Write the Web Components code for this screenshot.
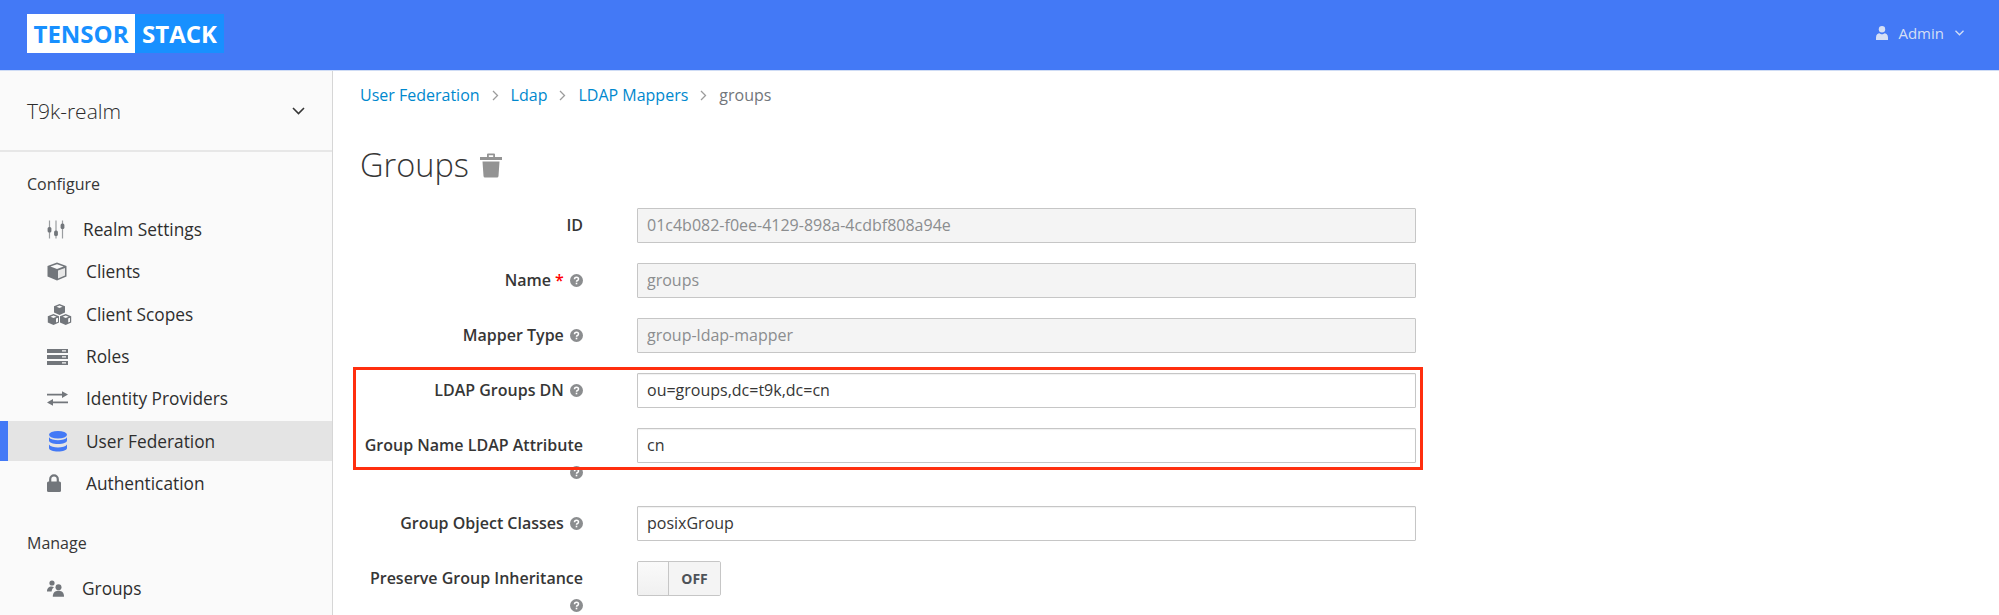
<!DOCTYPE html>
<html>
<head>
<meta charset="utf-8">
<title>Groups</title>
<style>
  html, body { margin: 0; height: 615px; overflow: hidden; background: #fff; }
  body { font-family: "Open Sans", sans-serif; font-size: 16px; color: #363636; }
</style>
</head>
<body>
<app-shell>
  <app-header slot="header"></app-header>
  <realm-sidebar slot="side" realm="T9k-realm">
    <nav-section title="Configure">
      <nav-item icon="sliders" gap="16">Realm Settings</nav-item>
      <nav-item icon="cube">Clients</nav-item>
      <nav-item icon="cubes">Client Scopes</nav-item>
      <nav-item icon="server">Roles</nav-item>
      <nav-item icon="exchange">Identity Providers</nav-item>
      <nav-item icon="database" active>User Federation</nav-item>
      <nav-item icon="lock">Authentication</nav-item>
    </nav-section>
    <nav-section title="Manage">
      <nav-item icon="users" gap="15">Groups</nav-item>
    </nav-section>
  </realm-sidebar>
  <mapper-page slot="main">
    <form-row label="ID"><text-field value="01c4b082-f0ee-4129-898a-4cdbf808a94e" disabled></text-field></form-row>
    <form-row label="Name" required help><text-field value="groups" disabled></text-field></form-row>
    <form-row label="Mapper Type" help><text-field value="group-ldap-mapper" disabled></text-field></form-row>
    <form-row label="LDAP Groups DN" help><text-field value="ou=groups,dc=t9k,dc=cn"></text-field></form-row>
    <form-row label="Group Name LDAP Attribute" help><text-field value="cn"></text-field></form-row>
    <form-row label="Group Object Classes" help><text-field value="posixGroup"></text-field></form-row>
    <form-row label="Preserve Group Inheritance" help><off-switch></off-switch></form-row>
  </mapper-page>
</app-shell>

<script>
'use strict';

(function () {

  const ICONS = {
    sliders: `<svg width="18" height="19" viewBox="0 0 18 19" fill="#72767b">
        <path d="M2.500 .5v18M9 .5v18M15.500 .5v18" stroke="#9a9da0" stroke-width="1.200"/>
        <rect x=".6" y="7" width="3.800" height="5.500" rx="1.500"/>
        <rect x="7.100" y="10.500" width="3.800" height="5.500" rx="1.500"/>
        <rect x="13.600" y="3.500" width="3.800" height="5.500" rx="1.500"/></svg>`,
    cube: `<svg width="20" height="19" viewBox="0 0 20 19" fill="currentColor">
        <path d="M10 0.500 19.500 4v10.500L10 18.500 0.500 14.500V4z"/>
        <path d="M10 2.200 16.600 4.600 10 7 3.400 4.600z" fill="#fafafa"/>
        <path d="M11 8.600 18 6v7.400l-7 3z" fill="#e8e8e8"/></svg>`,
    cubes: `<svg width="25" height="21" viewBox="0 0 25 21" fill="currentColor">
        <path d="M12.500 0 18 2.200v6.300l-5.500 2.400L7 8.500V2.200z"/>
        <path d="M6.500 10 12 12.200v6.300L6.500 21 .8 18.500v-6.300z"/>
        <path d="M18.700 10 24.200 12.200v6.300L18.700 21 13 18.500v-6.300z"/>
        <path d="M12.500 1.500 15.500 2.700 12.500 3.900 9.500 2.700zM6.500 11.500 9.500 12.700 6.500 13.900 3.500 12.700zM18.700 11.500 21.700 12.700 18.700 13.900 15.700 12.700z" fill="#fafafa"/>
        <path d="M9 14.500 11 13.700v4l-2 .9zM21.200 14.500 23 13.700v4l-1.800.9z" fill="#fafafa"/></svg>`,
    server: `<svg width="21" height="16" viewBox="0 0 21 16" fill="currentColor">
        <path d="M0 0h21v4H0zM0 6h21v4H0zM0 12h21v4H0z"/>
        <path d="M15 1.300h4v1.200h-4zM15 7.300h4v1.200h-4zM15 13.300h4v1.200h-4z" fill="#fafafa"/></svg>`,
    exchange: `<svg width="21" height="15" viewBox="0 0 21 15" fill="currentColor">
        <path d="M0 2.800h15V.3l6 3.300-6 3.300V4.500H0z"/><path d="M21 10.500H6V8L0 11.400l6 3.300v-2.500h15z"/></svg>`,
    database: `<svg width="18" height="21" viewBox="0 0 18 21" fill="currentColor">
        <ellipse cx="9" cy="3.800" rx="9" ry="3.800"/>
        <path d="M0 6.200C1.500 8.400 5 9.200 9 9.200s7.500-.8 9-3V9.500c0 2-4 3.500-9 3.500s-9-1.500-9-3.500z"/>
        <path d="M0 12c1.500 2.200 5 3 9 3s7.500-.8 9-3v3.500c0 2-4 3.500-9 3.500s-9-1.500-9-3.500z" transform="translate(0 1.500)"/></svg>`,
    lock: `<svg width="14" height="18" viewBox="0 0 14 18" fill="currentColor">
        <path d="M3.200 8V5.200a3.800 3.800 0 0 1 7.600 0V8" fill="none" stroke="currentColor" stroke-width="2.200"/>
        <rect y="7.500" width="14" height="10.500" rx="1.500"/></svg>`,
    users: `<svg width="17" height="17" viewBox="0 0 17 17" fill="currentColor">
        <circle cx="5" cy="3" r="2.600"/><path d="M0 11.500C0 8 2 6.500 4.500 6.500c1 0 1.800.3 2.500.8-1.500 1-2.200 2.500-2.400 4.200z"/>
        <circle cx="11.500" cy="7.300" r="3"/><path d="M5.800 16.800c0-4 2-6 5.700-6s5.500 2 5.500 6z"/></svg>`
  };

  class AppShell extends HTMLElement {
    constructor() {
      super();
      const shadow = this.attachShadow({ mode: 'open' });
      shadow.innerHTML = `
        <style>
          :host { display: flex; flex-direction: column; height: 615px; overflow: hidden; }
          .body { display: flex; flex: 1; min-height: 0; }
        </style>
        <slot name="header"></slot>
        <div class="body">
          <slot name="side"></slot>
          <slot name="main"></slot>
        </div>
      `;
    }
  }

  class AppHeader extends HTMLElement {
    constructor() {
      super();
      const shadow = this.attachShadow({ mode: 'open' });
      shadow.innerHTML = `
        <style>
          :host { display: flex; align-items: center; justify-content: space-between; box-sizing: border-box;
                  height: 71px; padding: 0 35px 8px 27px; background: #4379f6; border-bottom: 1px solid #cfdcf5; }
          .logo { display: flex; height: 39px; margin-top: 4px; font: 700 24px/39px "Open Sans", sans-serif; }
          .logo span { display: block; text-align: center; box-sizing: border-box; }
          .tensor { width: 108px; background: #fff; color: #1890ff; }
          .stack { width: 89px; background: #1890ff; color: #fff; }
          .user { display: flex; align-items: center; color: #d5dff5; font-size: 15px; margin: 4px 0 0; }
          .user svg { display: block; }
          .name { margin: 0 11px 0 10px; }
        </style>
        <div class="logo"><span class="tensor">TENSOR</span><span class="stack">STACK</span></div>
        <div class="user">
          <svg width="12" height="14" viewBox="0 0 12 14" fill="currentColor"><circle cx="6" cy="3.300" r="3.200"/><path d="M0 14v-2.500C0 8.500 2 7.200 3.500 7.200 4.500 8 5 8.200 6 8.200s1.500-.2 2.500-1C10 7.200 12 8.500 12 11.500V14z"/></svg>
          <span class="name">Admin</span>
          <svg width="9" height="6" viewBox="0 0 9 6" fill="none" stroke="currentColor" stroke-width="1.300"><path d="M.5 .8 4.500 4.800 8.500 .8"/></svg>
        </div>
      `;
    }
  }

  class RealmSidebar extends HTMLElement {
    constructor() {
      super();
      const shadow = this.attachShadow({ mode: 'open' });
      shadow.innerHTML = `
        <style>
          :host { display: block; box-sizing: border-box; width: 333px; flex: none; background: #fafafa; border-right: 1px solid #d6d6d6; }
          .realm { display: flex; align-items: center; justify-content: space-between; box-sizing: border-box;
                   height: 81px; padding: 0 27px 0 27px; border-bottom: 2px solid #e7e7e7;
                   font-size: 21px; font-weight: 300; color: #2c2c2c; }
          .realm svg { display: block; }
        </style>
        <div class="realm">
          <span>${this.getAttribute('realm')}</span>
          <svg width="13" height="8" viewBox="0 0 13 8" fill="none" stroke="#363636" stroke-width="1.600"><path d="M1 1l5.500 5.500L12 1"/></svg>
        </div>
        <slot></slot>
      `;
    }
  }

  class NavSection extends HTMLElement {
    constructor() {
      super();
      const shadow = this.attachShadow({ mode: 'open' });
      shadow.innerHTML = `
        <style>
          :host { display: block; padding-top: 21px; padding-bottom: 6px; }
          h2 { margin: 0 0 13.500px; padding-left: 27px; font-size: 16px; font-weight: 400; line-height: 22px; color: #363636; }
          :host(:last-of-type) h2 { margin-bottom: 14px; }
        </style>
        <h2>${this.getAttribute('title')}</h2>
        <slot></slot>
      `;
    }
  }

  class NavItem extends HTMLElement {
    constructor() {
      super();
      const shadow = this.attachShadow({ mode: 'open' });
      const icon = this.getAttribute('icon');
      const gap = this.getAttribute('gap');
      shadow.innerHTML = `
        <style>
          :host { display: flex; align-items: center; height: 42.300px; box-sizing: border-box; padding-left: 47px; font-size: 17.300px; color: #2e2e2e; }
          :host([active]) { background: #e4e4e4; box-shadow: inset 8px 0 0 #4379f6; height: 40px; margin: 1.150px 0; }
          .icon { display: flex; align-items: center; justify-content: flex-start; width: 39px; flex: none; color: #72767b; }
          :host([active]) .icon { color: #4379f6; padding-left: 2px; width: 37px; }
          ${gap ? `.icon { width: ${Number(gap) + 20}px; }` : ''}
        </style>
        <span class="icon">${ICONS[icon]}</span>
        <slot></slot>
      `;
    }
  }

  class MapperPage extends HTMLElement {
    constructor() {
      super();
      const shadow = this.attachShadow({ mode: 'open' });
      shadow.innerHTML = `
        <style>
          :host { display: block; position: relative; flex: 1; padding: 0 0 0 27px; }
          .crumbs { display: flex; align-items: center; height: 24px; margin-top: 12px; font-size: 16px; color: #72767b; }
          .crumbs a { color: #0088ce; text-decoration: none; }
          .crumbs svg { margin: 0 12px 0 12px; display: block; }
          h1 { display: flex; align-items: center; margin: 32px 0 18.500px; height: 50px; font-size: 32.500px; font-weight: 300; color: #363636; }
          h1 svg { margin-left: 11px; margin-top: 3px; display: block; }
          .callout { position: absolute; left: 20px; top: 296px; width: 1070px; height: 103px; box-sizing: border-box;
                     border: 3px solid #ff2f0f; pointer-events: none; }
        </style>
        <div class="crumbs">
          <a>User Federation</a>${this.sep()}<a>Ldap</a>${this.sep()}<a>LDAP Mappers</a>${this.sep()}<span>groups</span>
        </div>
        <h1>Groups
          <svg width="22" height="25" viewBox="0 0 22 25" fill="#939393">
            <path d="M0 4h22v3H0zM7 4V1.500Q7 .5 8 .5h6q1 0 1 1V4h-1.800V2.200H8.800V4z"/>
            <path d="M2.500 8.500h17L18.500 23q-.1 1.500-1.500 1.500H5q-1.400 0-1.500-1.500z"/>
          </svg>
        </h1>
        <slot></slot>
        <div class="callout"></div>
      `;
    }

    sep() {
      return `<svg width="7" height="11" viewBox="0 0 7 11" fill="none" stroke="#9c9c9c" stroke-width="1.300"><path d="M1 1l4.500 4.500L1 10"/></svg>`;
    }
  }

  class FormRow extends HTMLElement {
    constructor() {
      super();
      const shadow = this.attachShadow({ mode: 'open' });
      const required = this.hasAttribute('required') ? ' <span class="req">*</span>' : '';
      const help = this.hasAttribute('help') ? ` <svg class="help" width="13" height="13" viewBox="0 0 13 13">
          <circle cx="6.500" cy="6.500" r="6.500" fill="#8b8d8f"/>
          <path d="M4.500 5.200Q4.500 3.200 6.500 3.200T8.500 5q0 1-1 1.500T6.500 7.800" fill="none" stroke="#fff" stroke-width="1.500"/>
          <rect x="5.700" y="8.700" width="1.600" height="1.600" fill="#fff"/></svg>` : '';
      shadow.innerHTML = `
        <style>
          :host { display: grid; grid-template-columns: 223px 779px; column-gap: 54px; margin-bottom: 20px; align-items: start; }
          label { display: block; padding-top: 4px; text-align: right; font-size: 16px; font-weight: 600; line-height: 27px; color: #363636; }
          .req { color: #f00; }
          .help { vertical-align: -1px; margin-left: 2px; }
        </style>
        <label>${this.getAttribute('label')}${required}${help}</label>
        <slot></slot>
      `;
    }
  }

  class TextField extends HTMLElement {
    constructor() {
      super();
      const shadow = this.attachShadow({ mode: 'open' });
      const disabled = this.hasAttribute('disabled');
      shadow.innerHTML = `
        <style>
          :host { display: block; }
          input { display: block; width: 100%; height: 35px; box-sizing: border-box; margin: 0; padding: 0 9px;
                  border: 1px solid #c6c6c6; border-radius: 1px; outline: none;
                  box-shadow: inset 0 1px 1px rgba(3,3,3,.06);
                  font: 16px "Open Sans", sans-serif; color: #363636; background: #fff; }
          input:disabled { background: #f4f4f4; color: #8b8d8f; box-shadow: none; }
        </style>
        <input type="text" ${disabled ? 'disabled' : ''}>
      `;
      shadow.querySelector('input').setAttribute('value', this.getAttribute('value'));
    }
  }

  class OffSwitch extends HTMLElement {
    constructor() {
      super();
      const shadow = this.attachShadow({ mode: 'open' });
      shadow.innerHTML = `
        <style>
          :host { display: flex; width: 84px; height: 35px; box-sizing: border-box; border: 1px solid #c6c6c6; border-radius: 2px; overflow: hidden; }
          .knob { width: 30px; background: linear-gradient(#fafafa, #f0f0f0); border-right: 1px solid #c6c6c6; }
          .state { flex: 1; display: flex; align-items: center; justify-content: center; background: #f4f4f4;
                   font-size: 14px; font-weight: 700; color: #4d5258; }
        </style>
        <div class="knob"></div>
        <div class="state">OFF</div>
      `;
    }
  }

  customElements.define('app-shell', AppShell);
  customElements.define('app-header', AppHeader);
  customElements.define('realm-sidebar', RealmSidebar);
  customElements.define('nav-section', NavSection);
  customElements.define('nav-item', NavItem);
  customElements.define('mapper-page', MapperPage);
  customElements.define('form-row', FormRow);
  customElements.define('text-field', TextField);
  customElements.define('off-switch', OffSwitch);
})();
</script>
</body>
</html>
